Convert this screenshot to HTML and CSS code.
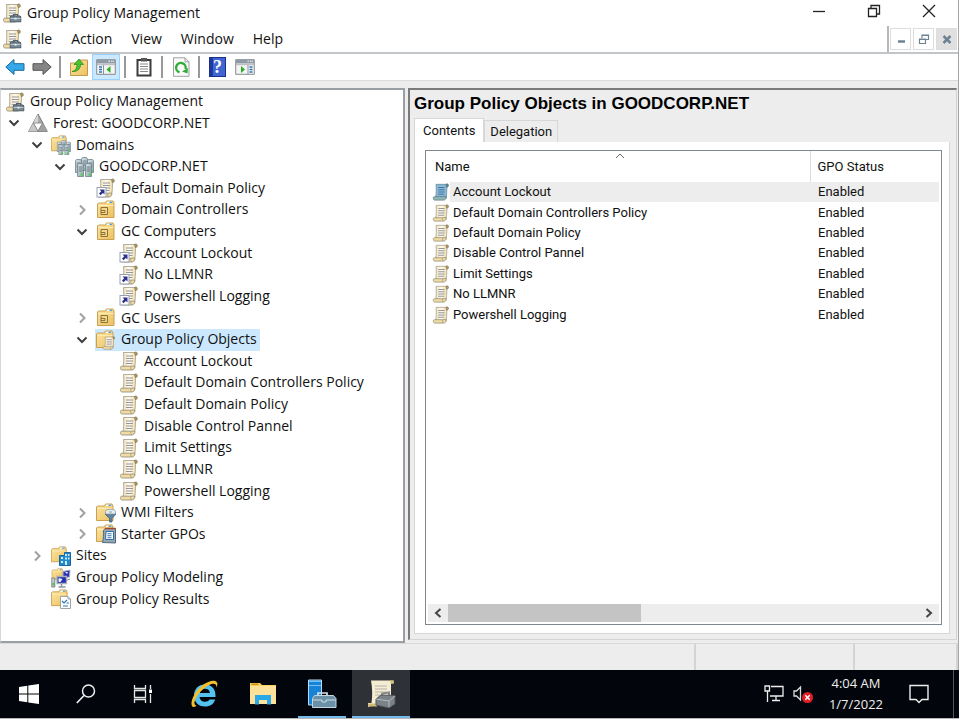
FILE: index.html
```html
<!DOCTYPE html>
<html lang="en">
<head>
<meta charset="utf-8">
<title>Group Policy Management</title>
<link rel="stylesheet" href="styles.css">
</head>
<body>
<svg class="defs" aria-hidden="true">
  <defs>
    <linearGradient id="paper" x1="0" x2="1" y1="0" y2="0"><stop offset="0" stop-color="#efe0b4"/><stop offset=".5" stop-color="#fffbef"/><stop offset="1" stop-color="#f0dca4"/></linearGradient>
    <linearGradient id="gold" x1="0" x2="1" y1="0" y2="1"><stop offset="0" stop-color="#fde6a2"/><stop offset="1" stop-color="#ecc061"/></linearGradient>
    <linearGradient id="metal" x1="0" x2="1" y1="0" y2="1"><stop offset="0" stop-color="#dfe7ea"/><stop offset="1" stop-color="#8fa3ad"/></linearGradient>
  </defs>
  <symbol id="scroll" viewBox="0 0 20 20">
    <path d="M4.500 1.500h12v4c0 4-.3 8-.8 11.500H4c.8-5 1-10 .5-15.500z" fill="url(#paper)" stroke="#aaa594" stroke-width=".9"/>
    <path d="M15.500 1.500c.7-.8 2.800-.7 2.800 1.200 0 1.200-1 1.900-1.900 1.900z" fill="#b59d62" stroke="#81765a" stroke-width=".8"/>
    <path d="M1.500 16.500c0-1 .6-1.300 1.500-1.300h9.200l3.500-.2c.2 2.300-.9 4-2.800 4H3c-1 0-1.500-.8-1.500-2.500z" fill="#efdba3" stroke="#9a927b" stroke-width=".9"/>
    <path d="M12 15.300c-.5 1.400-.3 2.900.7 3.600" fill="none" stroke="#9a927b" stroke-width=".8"/>
    <path d="M7 5h7M7 7.500h7M7 10h7M6.800 12.500h6.700" stroke="#9396a3" stroke-width="1.100"/>
  </symbol>
  <symbol id="scroll-blue" viewBox="0 0 20 20">
    <path d="M4.500 1.500h12v4c0 4-.3 8-.8 11.500H4c.8-5 1-10 .5-15.500z" fill="#8cb9d3" stroke="#668da3" stroke-width=".9"/>
    <path d="M15.500 1.500c.7-.8 2.800-.7 2.800 1.200 0 1.200-1 1.900-1.900 1.900z" fill="#5e8e93" stroke="#496b73" stroke-width=".8"/>
    <path d="M1.500 16.500c0-1 .6-1.300 1.500-1.300h9.200l3.500-.2c.2 2.300-.9 4-2.800 4H3c-1 0-1.500-.8-1.500-2.500z" fill="#94b9b5" stroke="#587e8a" stroke-width=".9"/>
    <path d="M7 5h7M7 7.500h7M7 10h7M6.800 12.500h6.700" stroke="#3f76a4" stroke-width="1.100"/>
  </symbol>
  <symbol id="link" viewBox="0 0 20 20">
    <use href="#scroll"/>
    <rect x="1" y="9.500" width="9" height="9.500" fill="#fff" stroke="#98a1b3"/>
    <path d="M3.500 11.500h5v5l-1.600-1.600-2.400 2.400-1.500-1.700 2.200-2.400z" fill="#30308f"/>
  </symbol>
  <symbol id="toolbox" viewBox="0 0 12 9">
    <path d="M4 2.500V1h4v1.500" fill="none" stroke="#56636d" stroke-width="1.200"/>
    <path d="M.5 3.500l1-1h9l1 1V8.500H.5z" fill="#788a96" stroke="#4a5963"/>
    <path d="M1 5h10" stroke="#b9c8d0"/><path d="M5 4.300h2v1.800H5z" fill="#e6edf0"/>
  </symbol>
  <symbol id="gpm" viewBox="0 0 20 20">
    <use href="#scroll"/><use href="#toolbox" x="7.500" y="10.500" width="12" height="9"/>
  </symbol>
  <symbol id="forest" viewBox="0 0 20 20">
    <path d="M10 1L.7 18.500h18.600z" fill="#aaa" stroke="#777"/>
    <path d="M10 1v9H5.200z" fill="#d5d5d5"/><path d="M.7 18.500L5.200 10 10 18.500z" fill="#c7c7c7"/><path d="M10 18.500l4.800-8.500 4.500 8.500z" fill="#a0a0a0"/>
    <path d="M5.400 10h9.200L10 18z" fill="#fff" stroke="#777" stroke-width=".8"/>
  </symbol>
  <symbol id="folder" viewBox="0 0 20 20">
    <path d="M1.500 4l1-1h7l1-2h6.500l1 2v14.500h-16.500z" fill="url(#gold)" stroke="#c9a055"/>
    <path d="M11 2.300h5" stroke="#fff" stroke-width="1.300"/><path d="M13.500 2.300h2.500" stroke="#3e9ddf" stroke-width="1.300"/>
    <path d="M2.500 5.500h15" stroke="#fff0bd" stroke-width=".8"/>
  </symbol>
  <symbol id="ou" viewBox="0 0 20 20">
    <use href="#folder"/><path d="M5 7.500h6.500v7H5z" fill="#f3d88c" stroke="#8d7235"/><path d="M5 10.500h4v2H5" fill="none" stroke="#8d7235"/>
  </symbol>
  <symbol id="tower" viewBox="0 0 7 14">
    <path d="M.5 2l1-1.500h4l1 1.500v11.500h-6z" fill="url(#metal)" stroke="#6c808c" stroke-width=".8"/>
    <path d="M1.500 4h4M1.500 6h4M1.500 8h4" stroke="#586d79" stroke-width=".8"/><path d="M3.700 10.500h2v2h-2z" fill="#42dd36"/>
  </symbol>
  <symbol id="servers" viewBox="0 0 20 20">
    <use href="#tower" x="7" y="0" width="7" height="14"/><use href="#tower" x="1" y="2" width="7" height="14"/><use href="#tower" x="13" y="2" width="7" height="14"/><use href="#tower" x="3" y="6" width="7" height="14"/><use href="#tower" x="11" y="6" width="7" height="14"/>
  </symbol>
  <symbol id="domains" viewBox="0 0 20 20">
    <use href="#folder" x="-1" width="18" height="18"/><use href="#servers" x="5" y="5" width="15" height="15"/>
  </symbol>
  <symbol id="gpo-folder" viewBox="0 0 20 20">
    <use href="#folder" x="-1"/><use href="#scroll" x="6" y="6" width="14" height="14"/>
  </symbol>
  <symbol id="wmi" viewBox="0 0 20 20">
    <use href="#folder" x="-1"/>
    <path d="M9 11h11l-4 4.500V19h-2.500v-3.500z" fill="#5d84a0" stroke="#41647c" stroke-width=".8"/><path d="M9.500 8.500c0-3 10-3 10 0V11h-10z" fill="#e6edf1" stroke="#8a99a2" stroke-width=".8"/><path d="M13 9h3" stroke="#8a99a2"/>
  </symbol>
  <symbol id="starter" viewBox="0 0 20 20">
    <use href="#folder" x="-1"/><path d="M6.500 18.500c1-3.500 1-8 1-12l1.500-2h10.500v14.500z" fill="#91a6b6" stroke="#53697a"/><path d="M9 4.500h10.500" stroke="#a5442b" stroke-width="1.500"/><path d="M10 7.500h7.500v8H9.500z" fill="#f3f8fc" stroke="#3d6d9b"/><path d="M11.500 9.700h4M11.500 11.700h4M11.500 13.700h4" stroke="#3f79ad"/>
  </symbol>
  <symbol id="sites" viewBox="0 0 20 20">
    <use href="#folder" x="-1" width="18" height="18"/><path d="M8.500 9.500h5v-3h6v13h-11z" fill="#2689cb" stroke="#1867a3"/><path d="M10 11h2v2h-2zM14 8h2v2h-2zM17 8h1.500v2H17zM14 11.500h2v2h-2zM17 11.500h1.500v2H17zM10 15h2v2h-2zM14 15h2v4h-2z" fill="#c6ecfc"/>
  </symbol>
  <symbol id="modeling" viewBox="0 0 20 20">
    <use href="#folder" x="0" y="0" width="13" height="13"/>
    <path d="M12 3.500l7-1.500-.5 7-6.500 1z" fill="#2c33b8" stroke="#a6b0b9"/><path d="M14 4h3l-1 2z" fill="#dbe5ff"/>
    <path d="M6 8.500h9.500v7H6z" fill="#262eb2" stroke="#a6b0b9" stroke-width="1.300"/><path d="M7.500 10l4 1-2 3h-2z" fill="#eef3ff"/><path d="M10.500 16v2.500M7.500 19h7" stroke="#8b969f" stroke-width="1.500"/>
    <path d="M.8 10h3v9h-3z" fill="url(#metal)" stroke="#7b8f82"/><path d="M1.300 16h2" stroke="#37c734" stroke-width="1.500"/><path d="M15 12.500l4-1.500" stroke="#7f8a92"/>
  </symbol>
  <symbol id="results" viewBox="0 0 20 20">
    <use href="#folder" x="-1" width="19" height="19"/><path d="M9.500 7.500h7.500l2.500 2.500v9.500h-10z" fill="#fff" stroke="#9aa5ac"/><path d="M17 7.500v2.500h2.500" fill="none" stroke="#9aa5ac"/><path d="M11 12l2 2 3-3M15.500 14H18M12 17h5" fill="none" stroke="#3478ad" stroke-width="1.200"/>
  </symbol>
  <symbol id="open" viewBox="0 0 12 12"><path d="M1.500 3.500L6 8l4.500-4.500" fill="none" stroke="#404040" stroke-width="2"/></symbol>
  <symbol id="closed" viewBox="0 0 12 12"><path d="M4 1.500L8.500 6 4 10.500" fill="none" stroke="#a0a0a0" stroke-width="2"/></symbol>
  <symbol id="arrow" viewBox="0 0 20 18"><path d="M.8 9L9 1.500v4.200h10v6.600H9v4.200z"/></symbol>
  <symbol id="pane" viewBox="0 0 20 16">
    <path d="M.7.7h18.600v14.600H.7z" fill="#f4f4f2" stroke="#858b91"/><path d="M1 1h18v3.500H1z" fill="#8e9ba6"/><path d="M12.500 2.200h1.500M15 2.200h1.500M17 2.200h1" stroke="#fff"/><path d="M1 5.700h18" stroke="#b1b6ba"/>
  </symbol>
</svg>

<main class="window">
  <header class="titlebar">
    <svg class="icon"><use href="#gpm"/></svg>
    <h1>Group Policy Management</h1>
    <div class="caption">
      <button aria-label="Minimize"><svg viewBox="0 0 14 14"><path d="M1 7.500h12"/></svg></button>
      <button aria-label="Restore"><svg viewBox="0 0 14 14"><path d="M1.500 4.500h8v8h-8zM4 4.500v-3h8.500V10H9.500"/></svg></button>
      <button aria-label="Close"><svg viewBox="0 0 14 14"><path d="M1 1l12 12M13 1L1 13"/></svg></button>
    </div>
  </header>
  <nav class="menubar">
    <svg class="icon"><use href="#gpm"/></svg>
    <button>File</button><button>Action</button><button>View</button><button>Window</button><button>Help</button>
    <div class="child-controls">
      <button aria-label="Minimize child window"><svg viewBox="0 0 12 12"><path d="M3 8.500h7" stroke-width="2.500"/></svg></button>
      <button aria-label="Restore child window"><svg viewBox="0 0 12 12"><path d="M1.500 6h6v4.500h-6zM4 5V2h6.500v4.500H8M1 6.500h7M4 2.500h7" stroke-width="1.200"/></svg></button>
      <button class="dim" aria-label="Close child window"><svg viewBox="0 0 12 12"><path d="M2.500 3l7 7M9.500 3l-7 7" stroke-width="2.500"/></svg></button>
    </div>
  </nav>
  <div class="toolbar">
    <button aria-label="Back"><svg viewBox="0 0 20 18"><use href="#arrow" fill="#35a8ea" stroke="#196a9d"/></svg></button>
    <button aria-label="Forward"><svg viewBox="0 0 20 18"><g transform="matrix(-1 0 0 1 20 0)"><use href="#arrow" fill="#858585" stroke="#555"/></g></svg></button>
    <span class="rule"></span>
    <button aria-label="Up one level"><svg viewBox="0 0 20 20"><path d="M1.500 6h8l1.500-3h7.500v15.500h-17z" fill="url(#gold)" stroke="#c09a4c"/><path d="M3 14.500c4-1 5-3.500 5-7H5L10 2l4.500 5.500h-3c0 4.500-3 7.500-8.500 7z" fill="#4cc22d" stroke="#23871a" stroke-width=".7"/></svg></button>
    <button class="on" aria-label="Show or hide console tree"><svg viewBox="0 0 20 16"><use href="#pane"/><path d="M7.500 6v9" stroke="#8995a0"/><path d="M3 8h3M3 10.500h3M3 13h3" stroke="#2f77b9" stroke-width="1.400"/><path d="M14.500 7v7l-4-3.500z" fill="#2bad25"/></svg></button>
    <span class="rule"></span>
    <button aria-label="Clipboard"><svg viewBox="0 0 20 20"><path d="M3.500 3h13v15.500h-13z" fill="#fff" stroke="#3b3b3b" stroke-width="2"/><path d="M7 1h6v3.500H7z" fill="#555"/><path d="M6 7h8M6 9.500h8M6 12h8M6 14.500h8" stroke="#8a8a8a"/></svg></button>
    <span class="rule"></span>
    <button aria-label="Refresh"><svg viewBox="0 0 20 20"><path d="M2.500.8H14l4 4v14.500H2.500z" fill="#fafafa" stroke="#a0a0a0"/><path d="M14 .8v4h4" fill="none" stroke="#a0a0a0"/><path d="M8.500 15.300a4.800 4.800 0 1 1 6-3.300" fill="none" stroke="#2eae36" stroke-width="2.400"/><path d="M17 11l-.5 5.500-5.500-2z" fill="#2eae36"/></svg></button>
    <span class="rule"></span>
    <button class="help" aria-label="Help">?</button>
    <button aria-label="Show or hide action pane"><svg viewBox="0 0 20 16"><use href="#pane"/><path d="M13 6v9" stroke="#8995a0"/><path d="M14.500 8h3M14.500 10.500h3M14.500 13h3" stroke="#2f77b9" stroke-width="1.400"/><path d="M6 7v7l4-3.500z" fill="#2bad25"/></svg></button>
  </div>

  <div class="workspace">
    <aside class="tree-pane">
      <ul class="tree" role="tree" aria-label="Console tree">
        <li role="treeitem" class="root"><svg class="icon"><use href="#gpm"/></svg><span>Group Policy Management</span></li>
        <li role="treeitem" class="l0"><button aria-label="Collapse"><svg><use href="#open"/></svg></button><svg class="icon"><use href="#forest"/></svg><span>Forest: GOODCORP.NET</span></li>
        <li role="treeitem" class="l1"><button aria-label="Collapse"><svg><use href="#open"/></svg></button><svg class="icon"><use href="#domains"/></svg><span>Domains</span></li>
        <li role="treeitem" class="l2"><button aria-label="Collapse"><svg><use href="#open"/></svg></button><svg class="icon"><use href="#servers"/></svg><span>GOODCORP.NET</span></li>
        <li role="treeitem" class="l3 leaf"><svg class="icon"><use href="#link"/></svg><span>Default Domain Policy</span></li>
        <li role="treeitem" class="l3"><button aria-label="Expand"><svg><use href="#closed"/></svg></button><svg class="icon"><use href="#ou"/></svg><span>Domain Controllers</span></li>
        <li role="treeitem" class="l3"><button aria-label="Collapse"><svg><use href="#open"/></svg></button><svg class="icon"><use href="#ou"/></svg><span>GC Computers</span></li>
        <li role="treeitem" class="l4 leaf"><svg class="icon"><use href="#link"/></svg><span>Account Lockout</span></li>
        <li role="treeitem" class="l4 leaf"><svg class="icon"><use href="#link"/></svg><span>No LLMNR</span></li>
        <li role="treeitem" class="l4 leaf"><svg class="icon"><use href="#link"/></svg><span>Powershell Logging</span></li>
        <li role="treeitem" class="l3"><button aria-label="Expand"><svg><use href="#closed"/></svg></button><svg class="icon"><use href="#ou"/></svg><span>GC Users</span></li>
        <li role="treeitem" class="l3 selected" aria-selected="true"><button aria-label="Collapse"><svg><use href="#open"/></svg></button><svg class="icon"><use href="#gpo-folder"/></svg><span>Group Policy Objects</span></li>
        <li role="treeitem" class="l4 leaf"><svg class="icon"><use href="#scroll"/></svg><span>Account Lockout</span></li>
        <li role="treeitem" class="l4 leaf"><svg class="icon"><use href="#scroll"/></svg><span>Default Domain Controllers Policy</span></li>
        <li role="treeitem" class="l4 leaf"><svg class="icon"><use href="#scroll"/></svg><span>Default Domain Policy</span></li>
        <li role="treeitem" class="l4 leaf"><svg class="icon"><use href="#scroll"/></svg><span>Disable Control Pannel</span></li>
        <li role="treeitem" class="l4 leaf"><svg class="icon"><use href="#scroll"/></svg><span>Limit Settings</span></li>
        <li role="treeitem" class="l4 leaf"><svg class="icon"><use href="#scroll"/></svg><span>No LLMNR</span></li>
        <li role="treeitem" class="l4 leaf"><svg class="icon"><use href="#scroll"/></svg><span>Powershell Logging</span></li>
        <li role="treeitem" class="l3"><button aria-label="Expand"><svg><use href="#closed"/></svg></button><svg class="icon"><use href="#wmi"/></svg><span>WMI Filters</span></li>
        <li role="treeitem" class="l3"><button aria-label="Expand"><svg><use href="#closed"/></svg></button><svg class="icon"><use href="#starter"/></svg><span>Starter GPOs</span></li>
        <li role="treeitem" class="l1"><button aria-label="Expand"><svg><use href="#closed"/></svg></button><svg class="icon"><use href="#sites"/></svg><span>Sites</span></li>
        <li role="treeitem" class="l1 leaf"><svg class="icon"><use href="#modeling"/></svg><span>Group Policy Modeling</span></li>
        <li role="treeitem" class="l1 leaf"><svg class="icon"><use href="#results"/></svg><span>Group Policy Results</span></li>
      </ul>
    </aside>

    <section class="detail">
      <h2>Group Policy Objects in GOODCORP.NET</h2>
      <div class="tabs" role="tablist">
        <button role="tab" aria-selected="true" class="active">Contents</button><button role="tab" aria-selected="false">Delegation</button>
      </div>
      <div class="tab-panel" role="tabpanel">
        <div class="listbox">
          <table>
            <colgroup><col><col class="status-col"></colgroup>
            <thead><tr><th>Name<svg class="sort" viewBox="0 0 10 6"><path d="M1 5l4-4 4 4"/></svg></th><th>GPO Status</th></tr></thead>
            <tbody>
              <tr class="current"><td><div><svg class="icon"><use href="#scroll-blue"/></svg><span>Account Lockout</span></div></td><td>Enabled</td></tr>
              <tr><td><div><svg class="icon"><use href="#scroll"/></svg><span>Default Domain Controllers Policy</span></div></td><td>Enabled</td></tr>
              <tr><td><div><svg class="icon"><use href="#scroll"/></svg><span>Default Domain Policy</span></div></td><td>Enabled</td></tr>
              <tr><td><div><svg class="icon"><use href="#scroll"/></svg><span>Disable Control Pannel</span></div></td><td>Enabled</td></tr>
              <tr><td><div><svg class="icon"><use href="#scroll"/></svg><span>Limit Settings</span></div></td><td>Enabled</td></tr>
              <tr><td><div><svg class="icon"><use href="#scroll"/></svg><span>No LLMNR</span></div></td><td>Enabled</td></tr>
              <tr><td><div><svg class="icon"><use href="#scroll"/></svg><span>Powershell Logging</span></div></td><td>Enabled</td></tr>
            </tbody>
          </table>
          <div class="scrollbar">
            <button aria-label="Scroll left"><svg viewBox="0 0 12 12"><path d="M8.500 2L4 6l4.500 4"/></svg></button>
            <div class="track"><div class="thumb"></div></div>
            <button aria-label="Scroll right"><svg viewBox="0 0 12 12"><path d="M3.500 2L8 6l-4.500 4"/></svg></button>
          </div>
        </div>
      </div>
    </section>
  </div>
  <footer class="statusbar"><span></span><span></span><span></span></footer>
</main>

<div class="taskbar">
  <button aria-label="Start"><svg viewBox="0 0 20 20"><path d="M0 3l8.300-1.200v7.700H0zM9.300 1.600L20 0v9.500H9.300zM0 10.500h8.300v7.700L0 17zM9.300 10.500H20V20l-10.700-1.600z" fill="#fff"/></svg></button>
  <button aria-label="Search"><svg viewBox="0 0 20 20"><circle cx="12.500" cy="7" r="6" fill="none" stroke="#eee" stroke-width="1.500"/><path d="M8 11.500L.8 19" stroke="#eee" stroke-width="1.700"/></svg></button>
  <button aria-label="Task View"><svg viewBox="0 0 20 20"><path d="M1.500 1v3.500h11V1M1.500 19v-3.500h11V19M1.500 6.500h11v7h-11zM17.500 1v4M17.500 10v9" fill="none" stroke="#e6e6e6" stroke-width="1.300"/><path d="M16 5.500h3v3.500h-3z" fill="#fff"/></svg></button>
  <div class="pinned">
    <button aria-label="Internet Explorer"><svg class="big" viewBox="0 0 28 28"><path d="M25.500 17H9.500c.3 3 2.300 4.700 5.500 4.700 2.200 0 3.600-.7 4.500-2.200h5.700c-1.400 4.400-5 7-10.200 7C8.300 26.500 4 22 4 15.500 4 9 8.500 4.500 14.800 4.500c7 0 11.200 4.700 10.700 12.500zM9.700 13h10.200c-.3-2.700-2-4.200-5-4.200-2.900 0-4.700 1.500-5.200 4.200z" fill="#52c3f1"/><path d="M2.300 26.500C-.5 23 4 12 12.500 5.300 19 .3 25.500-.6 27 2.500c.7 1.500.3 3.300-.6 5 .3-3.300-1.500-4.500-4.900-3.500C15.500 5.800 5.500 15 4.500 22c-.3 2.200.5 3.500 2 3.700-1.700 1.300-3.300 1.600-4.200.8z" fill="#f5bf2b"/></svg></button>
    <button aria-label="File Explorer"><svg class="big" viewBox="0 0 28 28"><path d="M1 3h10l2 2h14v19H1z" fill="#fbd15f"/><path d="M1 6h26v18H1z" fill="#ffe29a"/><path d="M2.500 3.500h7V5h-7z" fill="#c99419"/><path d="M6 24.500V15h16v9.500h-4V20h-8v4.500z" fill="#2aa9e8"/></svg></button>
    <button class="running" aria-label="Server Manager"><svg class="huge" viewBox="0 0 30 30"><path d="M1.500 1h13v25h-13z" fill="#1683d7" stroke="#b5dbf7"/><path d="M2 6.500h12M2 2.500h12" stroke="#77bff1"/><path d="M11 17v-3h9v3" fill="none" stroke="#d7e2e8" stroke-width="1.700"/><path d="M5.500 19.500l2-3h19l2.500 3v9H5.500z" fill="#6b91a8" stroke="#c4d5de"/><path d="M6 21h9v2h4v-2h10" fill="none" stroke="#cddbe2"/></svg></button>
    <button class="running focused" aria-label="Group Policy Management"><svg class="huge" viewBox="0 0 30 30"><path d="M5 1.500h22v3h-2v21H9l-7 2.500v-4h3.500c1-7 1-14-.5-22.500z" fill="#f5edd2"/><path d="M24.500 1.500H28v3h-3.500zM2 24.500h9v3H2z" fill="#d2bb78"/><path d="M9 7h12M9 10h12M9 13h12M9 16h5" stroke="#b5b2aa" stroke-width="1.200"/><path d="M16 17v-2.500l7-1v3" fill="none" stroke="#87898c" stroke-width="2"/><path d="M10 20l5-4 14 .5V25l-6 4-13-3z" fill="#7b8288" stroke="#4f565c"/><path d="M10 20l13 2 6-5M23 22v6" fill="none" stroke="#b5bcc0"/></svg></button>
  </div>
  <div class="tray">
    <svg class="net" viewBox="0 0 20 18"><path d="M7 1.500h12v9.500H6M3.500 6v11M12 11v4M8 15.500h8M1 1h4.500v5H1z" fill="none" stroke="#eee" stroke-width="1.300"/></svg>
    <svg class="vol" viewBox="0 0 20 18"><path d="M1 6h2.500L7.500 2v13L3.500 11H1z" fill="none" stroke="#ddd" stroke-width="1.300"/><circle cx="14.500" cy="12.500" r="5.500" fill="#e01f28"/><path d="M12.300 10.300l4.400 4.400M16.700 10.300l-4.400 4.400" stroke="#fff" stroke-width="1.500"/></svg>
    <time datetime="2022-01-07T04:04">4:04 AM<br>1/7/2022</time>
    <svg class="note" viewBox="0 0 20 20"><path d="M1 1.500h18v14h-6L10 18.500l-3-3H1z" fill="none" stroke="#eee" stroke-width="1.400"/></svg>
  </div>
</div>
</body>
</html>
```
FILE: styles.css
```css
* { box-sizing: border-box; }

html, body { height: 100%; }

body {
  margin: 0;
  display: flex;
  flex-direction: column;
  background: #ededed;
  color: #111;
  font: 14px/20px "Open Sans", "Noto Sans", sans-serif;
}

button {
  margin: 0;
  padding: 0;
  border: 0;
  background: none;
  color: inherit;
  font: inherit;
}

svg { display: block; flex: none; }
.defs { position: absolute; width: 0; height: 0; }
.icon { width: 20px; height: 20px; }

.window {
  flex: 1;
  min-height: 0;
  display: flex;
  flex-direction: column;
  border-right: 1px solid #a6a6a6;
}

.titlebar, .menubar {
  display: flex;
  align-items: center;
  height: 26px;
  padding-left: 2px;
  background: #fff;
}
.titlebar h1 { margin: 0 0 0 5px; font-size: 14px; font-weight: 400; }

.caption { display: flex; margin-left: auto; padding-right: 22px; gap: 41px; align-self: flex-start; padding-top: 4px; }
.caption svg { width: 14px; height: 14px; fill: none; stroke: #222; stroke-width: 1.3; }

.menubar { height: 28px; border-bottom: 2px solid #c2c6c8; }
.menubar > button { margin-left: 8px; margin-right: 11px; }

.child-controls {
  display: flex;
  align-items: center;
  gap: 2px;
  height: 100%;
  margin-left: auto;
  padding: 0 1px;
  border-left: 2px solid #b5b8ba;
}
.child-controls button {
  display: grid;
  place-items: center;
  width: 21px;
  height: 22px;
  border: 1px solid #ddd;
}
.child-controls .dim { background: #e0e0e0; }
.child-controls svg { width: 12px; height: 12px; fill: none; stroke: #6f8291; }

.toolbar {
  display: flex;
  align-items: center;
  height: 27px;
  padding-left: 1px;
  background: #fff;
  border-bottom: 1px solid #dcdcdc;
}
.toolbar button { display: grid; place-items: center; width: 27px; height: 26px; }
.toolbar svg { width: 20px; height: 20px; }
.toolbar .on { width: 28px; background: #cce8ff; border: 1px solid #99d1ff; }
.toolbar .rule { width: 2px; height: 22px; margin: 0 4px; background: #999; }
.toolbar .help {
  width: 17px;
  height: 20px;
  margin: 0 5px;
  border: 1px solid #1a2f86;
  background: linear-gradient(90deg, #20399c 3px, #3f65d2 3px);
  color: #fff;
  font: bold 18px/18px "Liberation Serif", serif;
}

.workspace {
  flex: 1;
  min-height: 0;
  display: grid;
  grid-template-columns: 405fr 553fr;
  padding-top: 7px;
}

.tree-pane {
  padding-top: 1px;
  background: #fff;
  border: 2px solid #999fa5;
  border-left: 1px solid #d4d6da;
}
.tree {
  display: grid;
  grid-auto-rows: 1fr;
  height: 519px;
  margin: 0;
  padding: 0 0 0 4px;
  list-style: none;
}
.tree li { display: flex; align-items: center; white-space: nowrap; }
.tree li > span { padding: 0 4px 1px 5px; }
.tree li > button { width: 12px; margin-right: 8px; }
.tree li > button svg { width: 12px; height: 12px; }
.tree .l0 { padding-left: 3px; }
.tree .l1 { padding-left: 26px; }
.tree .l2 { padding-left: 49px; }
.tree .l3 { padding-left: 71px; }
.tree .l4 { padding-left: 94px; }
.tree .leaf::before { content: ""; width: 20px; }
.tree .selected { background: linear-gradient(#cce8ff, #cce8ff) 90px 0 / 165px 100% no-repeat; }

.detail {
  display: flex;
  flex-direction: column;
  margin: 0 1px 3px 3px;
  padding: 4px 6px 5px 4px;
  border-top: 2px solid #7a7a7a;
  border-left: 2px solid #7a7a7a;
  border-right: 1px solid #d4d4d4;
  border-bottom: 1px solid #d4d4d4;
  font: 13px/16px Roboto, "Liberation Sans", sans-serif;
}
.detail h2 { margin: 0 0 4px; font: bold 17px/20px "Liberation Sans", Arial, sans-serif; color: #000; }

.tabs { display: flex; align-items: flex-end; }
.tabs button {
  height: 22px;
  padding: 0 5px;
  border: 1px solid #d7d7d7;
  border-bottom: 0;
  line-height: 20px;
}
.tabs .active { height: 24px; padding: 0 8px; background: #fff; }

.tab-panel {
  flex: 1;
  min-height: 0;
  display: flex;
  padding: 8px 7px 8px 10px;
  background: #fff;
  border: 1px solid #d7d7d7;
  border-top-width: 0;
}
.listbox {
  flex: 1;
  display: flex;
  flex-direction: column;
  padding: 0 2px 2px;
  border: 1px solid #7f8891;
}
.listbox table { width: 100%; height: 174px; border-collapse: collapse; table-layout: fixed; }
.status-col { width: 129px; }
.listbox th { position: relative; height: 31px; padding: 1px 7px 0; text-align: left; font-weight: 400; }
.listbox th + th { border-left: 1px solid #ddd; }
.listbox td { padding: 0; }
.listbox td + td { padding-left: 8px; }
.listbox td div { display: flex; align-items: center; }
.listbox td .icon { width: 18px; height: 18px; margin: 0 3px 0 4px; }
.listbox .current { background: linear-gradient(#ededed, #ededed) 22px 0 no-repeat; }
.sort { position: absolute; top: 2px; left: 49%; width: 10px; height: 6px; fill: none; stroke: #666; }

.scrollbar { display: flex; height: 18px; margin-top: auto; background: #ededed; }
.scrollbar button { display: grid; place-items: center; width: 20px; }
.scrollbar svg { width: 12px; height: 12px; fill: none; stroke: #444; stroke-width: 2; }
.track { flex: 1; }
.thumb { width: 41%; height: 100%; background: #c4c4c4; }

.statusbar { display: flex; height: 27px; border-top: 1px solid #d9d9d9; }
.statusbar span { width: 159px; border-right: 2px solid #d4d4d4; }
.statusbar span:first-child { flex: 1; }
.statusbar span:last-child { width: 103px; }

.taskbar {
  display: flex;
  height: 49px;
  background: #02050b;
  border-bottom: 1px solid #b8b8b8;
  color: #eee;
}
.taskbar button { display: grid; place-items: center; width: 57px; }
.taskbar svg { width: 20px; height: 20px; }
.pinned { display: flex; gap: 1px; margin-left: 4px; }
.pinned button { position: relative; width: 58px; }
.taskbar .big { width: 28px; height: 28px; }
.taskbar .huge { width: 30px; height: 30px; }
.running::after { content: ""; position: absolute; bottom: 0; left: 5px; right: 5px; height: 2px; background: #76b9ed; }
.focused { background: #2e3136; }
.focused::after { left: 0; right: 0; }

.tray {
  display: flex;
  align-items: center;
  margin: 0 5px 0 auto;
  padding-right: 24px;
  border-right: 1px solid #555;
}
.tray time { width: 58px; margin: 0 24px 0 14px; text-align: center; font-size: 13px; line-height: 21px; white-space: nowrap; }
.tray .vol { margin-left: 9px; }
```
